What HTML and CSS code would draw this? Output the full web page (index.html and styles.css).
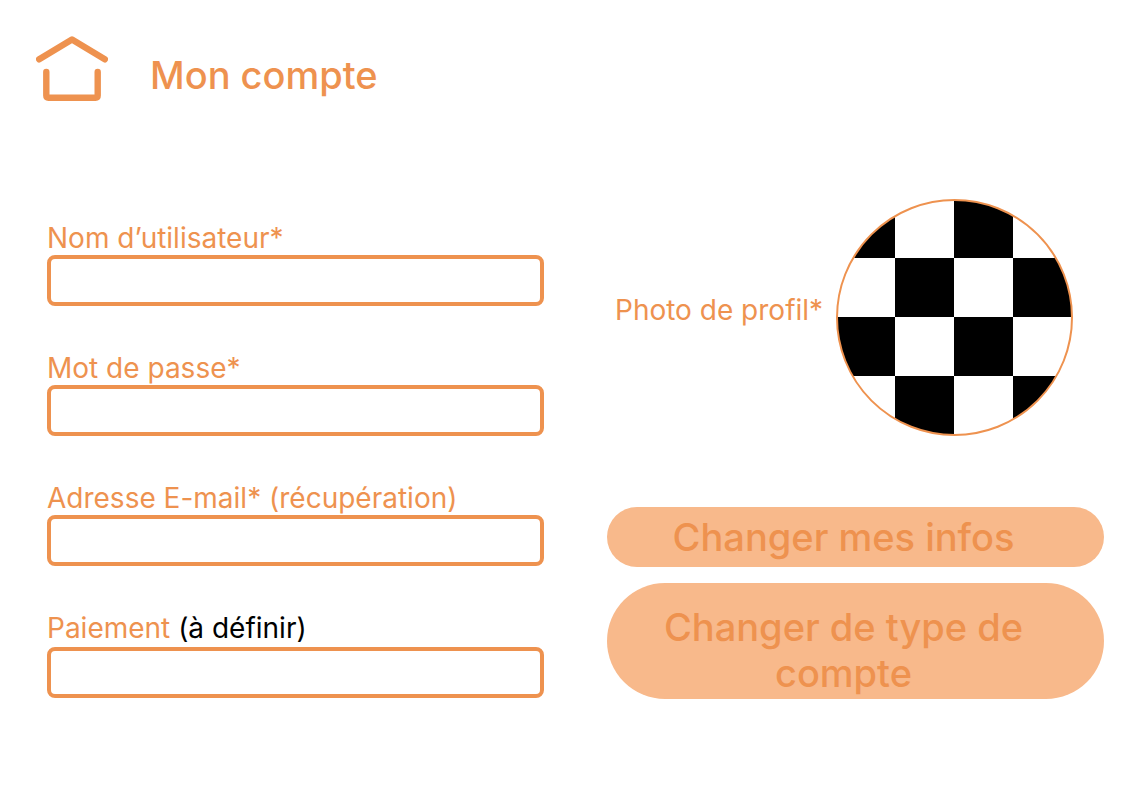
FILE: index.html
```html
<!DOCTYPE html>
<html lang="fr">
<head>
<meta charset="utf-8">
<meta name="viewport" content="width=device-width, initial-scale=1">
<title>Mon compte</title>
<link rel="stylesheet" href="styles.css">
</head>
<body>
<header class="header">
  <a class="home" href="#" aria-label="Accueil">
    <svg class="home-icon" viewBox="0 0 72 66" fill="none" stroke="currentColor" stroke-width="6.400" stroke-linecap="round" stroke-linejoin="round" aria-hidden="true">
      <path d="M3.200 23.300L36 3.400L68.800 23.300"/>
      <path d="M10.300 36V59.500Q10.300 61.700 12.500 61.700H59.500Q61.700 61.700 61.700 59.500V36"/>
    </svg>
  </a>
  <h1 class="title">Mon compte</h1>
</header>
<main>
  <form class="account">
    <div class="fields">
      <div class="field">
        <label class="label" for="user">Nom d’utilisateur*</label>
        <input class="input" id="user" type="text" required>
      </div>
      <div class="field">
        <label class="label" for="password">Mot de passe*</label>
        <input class="input" id="password" type="password" required>
      </div>
      <div class="field">
        <label class="label" for="email">Adresse E-mail* (récupération)</label>
        <input class="input" id="email" type="email" required>
      </div>
      <div class="field field-spaced">
        <label class="label" for="payment">Paiement <span class="note">(à définir)</span></label>
        <input class="input" id="payment" type="text">
      </div>
    </div>
    <div class="side">
      <div class="profile">
        <span class="label">Photo de profil*</span>
        <div class="avatar" role="img" aria-label="Photo de profil"></div>
      </div>
      <div class="actions">
        <button class="button" type="submit">Changer mes infos</button>
        <button class="button button-large" type="button">Changer de type de compte</button>
      </div>
    </div>
  </form>
</main>
</body>
</html>
```
FILE: styles.css
```css
:root {
  --orange: #ee924f;
  --peach: #f8b98b;
}

* {
  box-sizing: border-box;
}

body {
  margin: 0;
  background: #fff;
  color: var(--orange);
  font-family: Inter, sans-serif;
  font-weight: 500;
}

.header {
  display: flex;
  align-items: center;
  gap: 42px;
  padding: 36px 36px 0;
}

.home {
  color: inherit;
}

.home-icon {
  display: block;
  width: 72px;
  height: 66px;
}

.title {
  margin: 12px 0 0;
  font-size: 38px;
  line-height: 46px;
  font-weight: 500;
}

.account {
  display: grid;
  grid-template-columns: 1fr 1fr;
  gap: 63px;
  padding: 97px 31px 32px 47px;
}

.fields {
  display: flex;
  flex-direction: column;
  gap: 45px;
  padding-top: 22px;
}

.field {
  display: flex;
  flex-direction: column;
}

.field-spaced {
  gap: 2px;
}

.label {
  font-size: 28px;
  font-weight: 400;
  line-height: 34px;
  white-space: nowrap;
}

.note {
  color: #000;
}

.input {
  width: 100%;
  height: 51px;
  padding: 0 12px;
  border: 4px solid var(--orange);
  border-radius: 8px;
  background: #fff;
  color: var(--orange);
  font: inherit;
  font-size: 24px;
}

.side {
  display: flex;
  flex-direction: column;
  gap: 71px;
}

.profile {
  display: flex;
  align-items: center;
  justify-content: space-between;
  padding: 0 31px 0 8px;
}

.profile .label {
  padding-bottom: 16px;
}

.avatar {
  width: 237px;
  height: 237px;
  border: 2px solid var(--orange);
  border-radius: 50%;
  background: conic-gradient(#fff 25%, #000 0 50%, #fff 0 75%, #000 0) 0 0 / 118px 118px border-box;
}

.actions {
  display: flex;
  flex-direction: column;
  gap: 16px;
}

.button {
  padding: 7px 76px 7px 52px;
  border: 0;
  border-radius: 58px;
  background: var(--peach);
  color: var(--orange);
  font: inherit;
  font-size: 38px;
  line-height: 46px;
}

.button-large {
  padding-top: 21px;
  padding-bottom: 3px;
}
```
